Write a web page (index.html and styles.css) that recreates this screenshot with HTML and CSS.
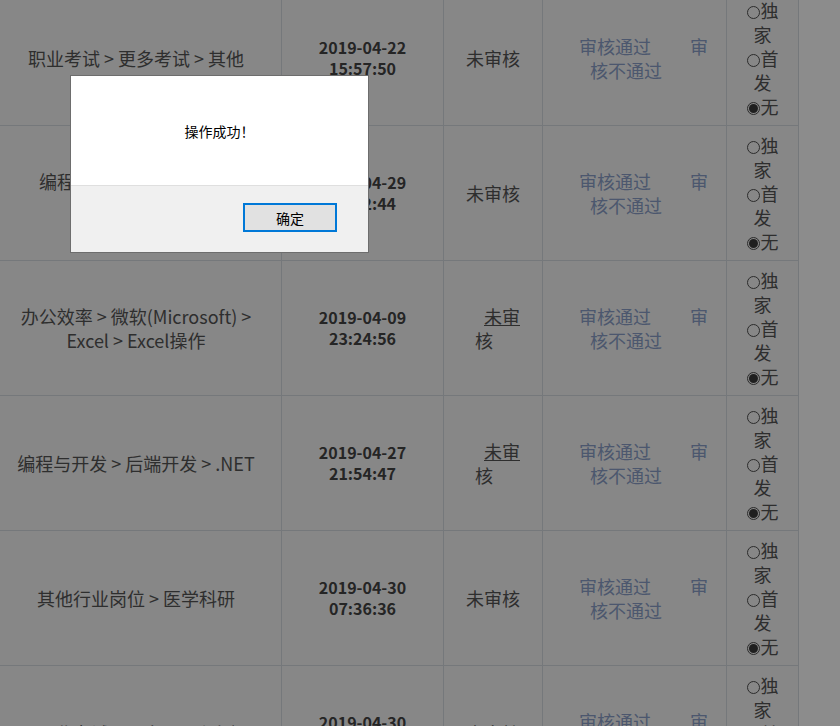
FILE: index.html
```html
<!DOCTYPE html>
<html lang="zh-CN">
<head>
<meta charset="utf-8">
<title>审核列表</title>
<link rel="stylesheet" href="styles.css">
</head>
<body>
<div class="page">
  <div class="grid">
    <div class="cell c-cat"><div class="txt">职业考试 &gt; 更多考试 &gt; 其他</div></div>
    <div class="cell c-date"><div class="date">2019-04-22<br>15:57:50</div></div>
    <div class="cell c-status"><div class="status">未审核</div></div>
    <div class="cell c-act"><div class="acts"><a class="act act-pass" href="#">审核通过</a><a class="act act-reject" href="#">审核不通过</a></div></div>
    <div class="cell c-opt"><div class="opts"><label class="opt"><input type="radio" name="r1">独家</label> <label class="opt"><input type="radio" name="r1">首发</label> <label class="opt"><input type="radio" name="r1" checked>无</label></div></div>

    <div class="cell c-cat"><div class="txt">编程与开发 &gt; 后端开发 &gt; Python</div></div>
    <div class="cell c-date"><div class="date">2019-04-29<br>16:32:44</div></div>
    <div class="cell c-status"><div class="status">未审核</div></div>
    <div class="cell c-act"><div class="acts"><a class="act act-pass" href="#">审核通过</a><a class="act act-reject" href="#">审核不通过</a></div></div>
    <div class="cell c-opt"><div class="opts"><label class="opt"><input type="radio" name="r2">独家</label> <label class="opt"><input type="radio" name="r2">首发</label> <label class="opt"><input type="radio" name="r2" checked>无</label></div></div>

    <div class="cell c-cat"><div class="txt">办公效率 &gt; 微软(Microsoft) &gt; Excel &gt; Excel操作</div></div>
    <div class="cell c-date"><div class="date">2019-04-09<br>23:24:56</div></div>
    <div class="cell c-status"><div class="status status-link"><a class="pending" href="#">未审核</a></div></div>
    <div class="cell c-act"><div class="acts"><a class="act act-pass" href="#">审核通过</a><a class="act act-reject" href="#">审核不通过</a></div></div>
    <div class="cell c-opt"><div class="opts"><label class="opt"><input type="radio" name="r3">独家</label> <label class="opt"><input type="radio" name="r3">首发</label> <label class="opt"><input type="radio" name="r3" checked>无</label></div></div>

    <div class="cell c-cat"><div class="txt">编程与开发 &gt; 后端开发 &gt; .NET</div></div>
    <div class="cell c-date"><div class="date">2019-04-27<br>21:54:47</div></div>
    <div class="cell c-status"><div class="status status-link"><a class="pending" href="#">未审核</a></div></div>
    <div class="cell c-act"><div class="acts"><a class="act act-pass" href="#">审核通过</a><a class="act act-reject" href="#">审核不通过</a></div></div>
    <div class="cell c-opt"><div class="opts"><label class="opt"><input type="radio" name="r4">独家</label> <label class="opt"><input type="radio" name="r4">首发</label> <label class="opt"><input type="radio" name="r4" checked>无</label></div></div>

    <div class="cell c-cat"><div class="txt">其他行业岗位 &gt; 医学科研</div></div>
    <div class="cell c-date"><div class="date">2019-04-30<br>07:36:36</div></div>
    <div class="cell c-status"><div class="status">未审核</div></div>
    <div class="cell c-act"><div class="acts"><a class="act act-pass" href="#">审核通过</a><a class="act act-reject" href="#">审核不通过</a></div></div>
    <div class="cell c-opt"><div class="opts"><label class="opt"><input type="radio" name="r5">独家</label> <label class="opt"><input type="radio" name="r5">首发</label> <label class="opt"><input type="radio" name="r5" checked>无</label></div></div>

    <div class="cell c-cat"><div class="txt">职业考试 &gt; 公务员 &gt; 行测</div></div>
    <div class="cell c-date"><div class="date">2019-04-30<br>09:15:23</div></div>
    <div class="cell c-status"><div class="status">未审核</div></div>
    <div class="cell c-act"><div class="acts"><a class="act act-pass" href="#">审核通过</a><a class="act act-reject" href="#">审核不通过</a></div></div>
    <div class="cell c-opt"><div class="opts"><label class="opt"><input type="radio" name="r6">独家</label> <label class="opt"><input type="radio" name="r6">首发</label> <label class="opt"><input type="radio" name="r6" checked>无</label></div></div>
  </div>
</div>

<div class="backdrop"></div>
<div class="dialog" role="alertdialog">
  <div class="dialog-body">操作成功！</div>
  <div class="dialog-foot"><button class="dialog-btn" type="button">确定</button></div>
</div>
</body>
</html>
```

FILE: styles.css
```css
html, body {
  margin: 0;
  padding: 0;
  background: #ffffff;
  font-family: "Noto Sans CJK SC", "Liberation Sans", sans-serif;
  color: #555555;
  overflow: hidden;
}

.page {
  width: 840px;
}

.grid {
  display: grid;
  grid-template-columns: 291px 162px 99px 184px 72px;
  grid-auto-rows: 135px;
  width: max-content;
  margin: -10px 0 0 -10px;
  border-top: 1px solid #d6dae0;
  border-left: 1px solid #d6dae0;
  background: #f6f6f6;
}

.cell {
  box-sizing: border-box;
  border-right: 1px solid #d6dae0;
  border-bottom: 1px solid #d6dae0;
  display: flex;
  align-items: center;
  justify-content: center;
  text-align: center;
  font-size: 18px;
  line-height: 24px;
  min-width: 0;
}

.c-cat { padding: 0 17px; }
.c-date { padding: 0 8px; }
.c-status { padding: 0 8px; }
.c-act { padding: 0 12px 0 30px; }
.c-opt { padding: 0 18px; }

.txt { color: #555555; }

.date {
  font-size: 16px;
  line-height: 21px;
  font-weight: bold;
  color: #444444;
}

.status { color: #555555; }

.status-link::first-line {
  text-decoration: underline;
}

.pending {
  color: #555555;
  text-decoration: none;
  margin: 0 18px;
}

.acts { color: #8a9fc8; }

.act {
  color: #8a9fc8;
  text-decoration: none;
}

.act-pass { margin-right: 39px; }
.act-reject { margin-right: 35px; }

.opts { color: #555555; }

.opt input {
  -webkit-appearance: none;
  appearance: none;
  box-sizing: border-box;
  width: 13px;
  height: 13px;
  margin: 0 1px 0 0;
  padding: 1px;
  border: 1px solid #4f4f4f;
  border-radius: 50%;
  background: transparent;
  background-clip: content-box;
  vertical-align: -1px;
}

.opt input:checked {
  background-color: #3a3a3a;
}

.backdrop {
  position: fixed;
  inset: 0;
  background: rgba(0, 0, 0, 0.45);
}

.dialog {
  position: fixed;
  left: 70px;
  top: 75px;
  width: 299px;
  box-sizing: border-box;
  border: 1px solid #6d6d6d;
  background: #ffffff;
  font-size: 14px;
  color: #000000;
  display: flex;
  flex-direction: column;
}

.dialog-body {
  height: 109px;
  border-bottom: 1px solid #dfdfdf;
  display: flex;
  align-items: center;
  justify-content: center;
}

.dialog-foot {
  height: 66px;
  box-sizing: border-box;
  background: #f0f0f0;
  display: flex;
  justify-content: flex-end;
  align-items: flex-start;
  padding: 17px 31px 0 0;
}

.dialog-btn {
  width: 94px;
  height: 29px;
  box-sizing: border-box;
  border: 2px solid #0078d7;
  background: #e1e1e1;
  font-family: "Noto Sans CJK SC", sans-serif;
  font-size: 14px;
  color: #000000;
  padding: 0;
}
```
